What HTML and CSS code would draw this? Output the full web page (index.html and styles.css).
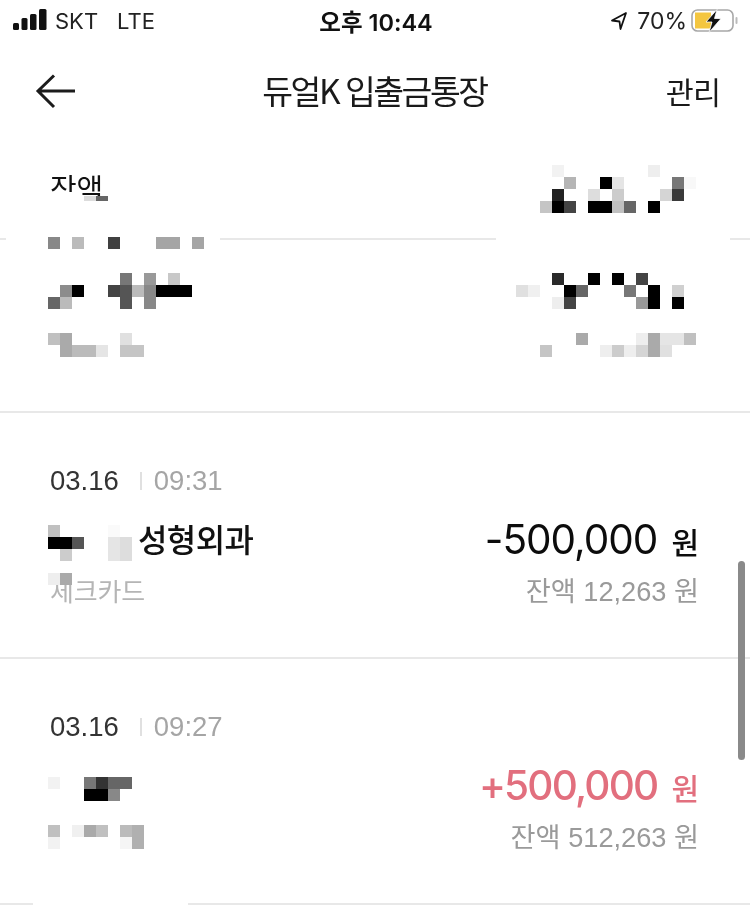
FILE: index.html
```html
<!DOCTYPE html>
<html lang="ko">
<head>
<meta charset="utf-8">
<title>듀얼K 입출금통장</title>
<link rel="stylesheet" href="styles.css">
</head>
<body>
<div class="page">
  <header class="status">
    <div class="status-left">
      <svg class="signal" width="34" height="24" viewBox="0 0 34 24"><rect x="0" y="14" width="6" height="7" rx="1.5"/><rect x="8.5" y="9" width="6" height="12" rx="1.5"/><rect x="17" y="5" width="6.5" height="16" rx="1.5"/><rect x="26" y="0" width="7.5" height="21" rx="1.5"/></svg>
      <span class="carrier">SKT</span><span class="carrier">LTE</span>
    </div>
    <div class="clock">오후 10:44</div>
    <div class="status-right">
      <svg class="loc" width="18" height="20" viewBox="0 0 18 20"><path d="M16 2 L2 9.5 L9.5 10.5 L10.5 18 Z" fill="none" stroke="#111" stroke-width="1.8" stroke-linejoin="round"/></svg>
      <span class="pct">70%</span>
      <svg class="batt" width="48" height="24" viewBox="0 0 48 24"><rect x="1" y="1" width="41" height="21" rx="5.5" fill="#fff" stroke="#a8a8a8" stroke-width="1.6"/><path d="M4 3.5 H20 V19.5 H4 Z" fill="#f4c640"/><path d="M26 0.5 L15 13 H21 L18 23.5 L30 9.5 H23.5 Z" fill="#111" stroke="#fff" stroke-width=".8"/><rect x="44.5" y="8" width="2" height="7" rx="1" fill="#bbb"/></svg>
    </div>
  </header>

  <nav class="nav">
    <svg class="back" width="42" height="36" viewBox="0 0 42 36"><path d="M40 17 H3 M19 1.5 L3 17 L19 33" fill="none" stroke="#1c1c1c" stroke-width="3"/></svg>
    <h1 class="title">듀얼K 입출금통장</h1>
    <span class="manage">관리</span>
  </nav>

  <section class="summary"><span class="summary-label">잔액</span></section>
  <section class="blank"></section>

  <article class="row">
    <div class="when"><span class="date">03.16</span><i class="sep"></i><span class="time">09:31</span></div>
    <div class="main"><span class="name">성형외과</span><span class="amount">-500,000<em class="won">원</em></span></div>
    <div class="sub"><span class="kind">체크카드</span><span class="balance">잔액 12,263 원</span></div>
  </article>

  <article class="row">
    <div class="when"><span class="date">03.16</span><i class="sep"></i><span class="time">09:27</span></div>
    <div class="main"><span class="name"></span><span class="amount plus">+500,000<em class="won">원</em></span></div>
    <div class="sub"><span class="kind"></span><span class="balance">잔액 512,263 원</span></div>
  </article>

  <div class="scrollbar"></div>

  <svg class="mosaic" width="750" height="909" viewBox="0 0 750 909" shape-rendering="crispEdges">
    <g fill="#fff">
      <rect x="48" y="192" width="26" height="12"/>
      <rect x="48" y="196" width="60" height="8"/>
      <rect x="6" y="232" width="214" height="14"/>
      <rect x="496" y="232" width="234" height="14"/>
      <rect x="46" y="570" width="104" height="10"/>
      <rect x="33" y="900" width="155" height="9"/>
    </g>
    <g>
      <rect x="84" y="196" width="12" height="5" fill="#dcdcdc"/><rect x="96" y="196" width="12" height="5" fill="#666"/>
      <rect x="48" y="237" width="12" height="12" fill="#888"/><rect x="72" y="237" width="12" height="12" fill="#bbb"/><rect x="108" y="237" width="12" height="12" fill="#404040"/><rect x="156" y="237" width="24" height="12" fill="#a5a5a5"/><rect x="192" y="237" width="12" height="12" fill="#a5a5a5"/>
      <rect x="120" y="273" width="12" height="12" fill="#777"/><rect x="144" y="273" width="12" height="12" fill="#999"/><rect x="168" y="273" width="12" height="12" fill="#c8c8c8"/>
      <rect x="60" y="285" width="12" height="12" fill="#8c8c8c"/><rect x="72" y="285" width="12" height="12" fill="#000"/><rect x="108" y="285" width="12" height="12" fill="#444"/><rect x="120" y="285" width="12" height="12" fill="#555"/><rect x="132" y="285" width="12" height="12" fill="#bbb"/><rect x="144" y="285" width="12" height="12" fill="#888"/><rect x="156" y="285" width="36" height="12" fill="#000"/>
      <rect x="48" y="297" width="12" height="12" fill="#666"/><rect x="60" y="297" width="12" height="12" fill="#bbb"/><rect x="120" y="297" width="12" height="12" fill="#555"/><rect x="144" y="297" width="12" height="12" fill="#888"/>
      <rect x="48" y="333" width="12" height="12" fill="#c0c0c0"/><rect x="60" y="333" width="12" height="12" fill="#aaa"/><rect x="120" y="333" width="12" height="12" fill="#e0e0e0"/>
      <rect x="60" y="345" width="12" height="12" fill="#aaa"/><rect x="72" y="345" width="24" height="12" fill="#bbb"/><rect x="96" y="345" width="12" height="12" fill="#e5e5e5"/><rect x="120" y="345" width="24" height="12" fill="#c5c5c5"/>
    </g>
    <g>
      <rect x="552" y="165" width="12" height="12" fill="#f2f2f2"/><rect x="648" y="165" width="12" height="12" fill="#eee"/>
      <rect x="564" y="177" width="12" height="12" fill="#b5b5b5"/><rect x="600" y="177" width="12" height="12" fill="#000"/><rect x="612" y="177" width="12" height="12" fill="#e5e5e5"/><rect x="672" y="177" width="12" height="12" fill="#777"/><rect x="684" y="177" width="12" height="12" fill="#f8f8f8"/>
      <rect x="552" y="189" width="12" height="12" fill="#222"/><rect x="588" y="189" width="12" height="12" fill="#ddd"/><rect x="612" y="189" width="12" height="12" fill="#ccc"/><rect x="660" y="189" width="12" height="12" fill="#d5d5d5"/><rect x="672" y="189" width="12" height="12" fill="#3a3a3a"/>
      <rect x="540" y="201" width="12" height="12" fill="#c5c5c5"/><rect x="552" y="201" width="12" height="12" fill="#000"/><rect x="564" y="201" width="12" height="12" fill="#444"/><rect x="588" y="201" width="24" height="12" fill="#000"/><rect x="612" y="201" width="12" height="12" fill="#c0c0c0"/><rect x="624" y="201" width="12" height="12" fill="#666"/><rect x="648" y="201" width="12" height="12" fill="#000"/>
      <rect x="552" y="273" width="12" height="12" fill="#2a2a2a"/><rect x="588" y="273" width="12" height="12" fill="#000"/><rect x="612" y="273" width="12" height="12" fill="#000"/><rect x="636" y="273" width="12" height="12" fill="#444"/>
      <rect x="516" y="285" width="12" height="12" fill="#e0e0e0"/><rect x="528" y="285" width="12" height="12" fill="#f0f0f0"/><rect x="564" y="285" width="12" height="12" fill="#000"/><rect x="576" y="285" width="12" height="12" fill="#666"/><rect x="624" y="285" width="12" height="12" fill="#777"/><rect x="648" y="285" width="12" height="12" fill="#000"/><rect x="672" y="285" width="12" height="12" fill="#d0d0d0"/>
      <rect x="552" y="297" width="12" height="12" fill="#eee"/><rect x="564" y="297" width="12" height="12" fill="#444"/><rect x="636" y="297" width="12" height="12" fill="#999"/><rect x="648" y="297" width="12" height="12" fill="#000"/><rect x="672" y="297" width="12" height="12" fill="#000"/>
      <rect x="576" y="333" width="12" height="12" fill="#aaa"/><rect x="636" y="333" width="12" height="12" fill="#eee"/><rect x="648" y="333" width="12" height="12" fill="#aaa"/><rect x="660" y="333" width="24" height="12" fill="#e5e5e5"/><rect x="684" y="333" width="12" height="12" fill="#c0c0c0"/>
      <rect x="540" y="345" width="12" height="12" fill="#c5c5c5"/><rect x="600" y="345" width="12" height="12" fill="#eee"/><rect x="612" y="345" width="12" height="12" fill="#ccc"/><rect x="624" y="345" width="12" height="12" fill="#eee"/><rect x="636" y="345" width="12" height="12" fill="#d5d5d5"/><rect x="648" y="345" width="12" height="12" fill="#aaa"/><rect x="660" y="345" width="12" height="12" fill="#e0e0e0"/>
    </g>
    <g>
      <rect x="48" y="525" width="12" height="12" fill="#c0c0c0"/><rect x="108" y="525" width="12" height="12" fill="#fafafa"/>
      <rect x="48" y="537" width="24" height="12" fill="#000"/><rect x="72" y="537" width="12" height="12" fill="#555"/><rect x="108" y="537" width="12" height="12" fill="#e5e5e5"/><rect x="120" y="537" width="12" height="12" fill="#ddd"/>
      <rect x="60" y="549" width="12" height="12" fill="#ccc"/><rect x="108" y="549" width="12" height="12" fill="#e5e5e5"/><rect x="120" y="549" width="12" height="12" fill="#ddd"/>
      <rect x="48" y="573" width="12" height="12" fill="#eee"/><rect x="60" y="573" width="12" height="12" fill="#aaa"/>
    </g>
    <g>
      <rect x="48" y="777" width="12" height="12" fill="#f2f2f2"/><rect x="84" y="777" width="12" height="12" fill="#777"/><rect x="96" y="777" width="12" height="12" fill="#333"/><rect x="108" y="777" width="24" height="12" fill="#666"/>
      <rect x="84" y="789" width="24" height="12" fill="#000"/><rect x="108" y="789" width="12" height="12" fill="#888"/>
      <rect x="48" y="825" width="12" height="12" fill="#c0c0c0"/><rect x="72" y="825" width="12" height="12" fill="#f0f0f0"/><rect x="84" y="825" width="12" height="12" fill="#aaa"/><rect x="96" y="825" width="12" height="12" fill="#c0c0c0"/><rect x="120" y="825" width="12" height="12" fill="#bbb"/><rect x="132" y="825" width="12" height="24" fill="#b0b0b0"/>
      <rect x="48" y="837" width="12" height="12" fill="#f2f2f2"/><rect x="120" y="837" width="12" height="12" fill="#f5f5f5"/>
    </g>
  </svg>
</div>
</body>
</html>
```

FILE: styles.css
```css
* { box-sizing: border-box; margin: 0; padding: 0; }
html, body { background: #fff; }
body { width: 750px; height: 909px; overflow: hidden; font-family: "Noto Sans CJK KR", "Liberation Sans", sans-serif; color: #111; }
.page { position: relative; width: 750px; height: 909px; overflow: hidden; filter: blur(.35px); }

.status { height: 42px; display: flex; align-items: center; justify-content: space-between; padding: 0 11px 0 13px; }
.status-left { display: flex; align-items: center; width: 220px; font-family: "Inter", "Liberation Sans", sans-serif; font-size: 22px; color: #222; }
.signal { fill: #111; margin-right: 8px; }
.carrier { margin-right: 19px; }
.clock { font-family: "Inter", "Noto Sans CJK KR", sans-serif; font-size: 23.5px; font-weight: 600; color: #111; }
.status-right { display: flex; align-items: center; justify-content: flex-end; width: 220px; gap: 7px; font-family: "Inter", "Liberation Sans", sans-serif; font-size: 23px; color: #222; }
.status-right .batt { margin-left: -3px; }
.loc { margin-right: 2px; }

.nav { height: 98px; display: flex; align-items: center; justify-content: space-between; padding: 0 30px 0 35px; }
.back { display: block; margin-top: 2px; }
.title { margin: 0 0 3px 6px; font-size: 33.5px; font-weight: 400; letter-spacing: -2.5px; color: #1a1a1a; }
.manage { font-size: 30.5px; letter-spacing: -1px; color: #1a1a1a; }

.summary { height: 100px; padding: 32px 50px 0; border-bottom: 2px solid #e8e8e8; }
.summary-label { display: block; font-size: 29px; line-height: 30px; letter-spacing: -.3px; color: #111; }
.blank { height: 173px; border-bottom: 2px solid #e8e8e8; }

.row { height: 246px; padding: 52px 51px 0 50px; border-bottom: 2px solid #e8e8e8; }
.when { height: 32px; display: flex; align-items: center; font-family: "Liberation Sans", sans-serif; font-size: 27.5px; }
.date { color: #333; }
.sep { width: 2px; height: 18px; background: #e0e0e0; margin: 0 12px 0 21px; }
.time { color: #a5a5a5; }
.main { height: 40px; margin-top: 22px; display: flex; align-items: center; justify-content: space-between; }
.name { margin: 0 0 2px 88px; font-size: 32px; font-weight: 500; letter-spacing: -.6px; color: #111; }
.amount { font-family: "Inter", "Noto Sans CJK KR", sans-serif; font-size: 40.5px; font-weight: 400; letter-spacing: -1px; color: #0c0c0c; }
.amount.plus { color: #e26f7e; font-weight: 500; letter-spacing: -1.8px; }
.won { font-family: "Noto Sans CJK KR", sans-serif; font-style: normal; font-size: 30px; font-weight: 500; margin-left: 14px; letter-spacing: 0; }
.sub { height: 30px; margin-top: 15px; display: flex; align-items: center; justify-content: space-between; font-family: "Liberation Sans", "Noto Sans CJK KR", sans-serif; font-size: 27.2px; }
.kind { font-size: 26px; letter-spacing: -.2px; color: #b5b5b5; }
.balance { color: #9a9a9a; }

.scrollbar { position: absolute; left: 738px; top: 561px; width: 7px; height: 199px; border-radius: 4px; background: #8a8a8a; }
.mosaic { position: absolute; left: 0; top: 0; }
```
